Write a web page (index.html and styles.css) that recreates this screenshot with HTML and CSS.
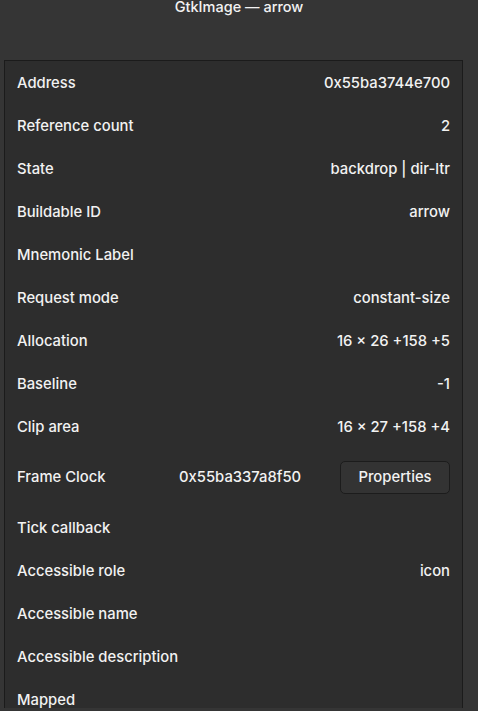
FILE: index.html
```html
<!DOCTYPE html>
<html>
<head>
<meta charset="utf-8">
<link rel="stylesheet" href="styles.css">
</head>
<body>
<div class="window">
  <div class="title">GtkImage — arrow</div>
  <div class="panel">
    <div class="row"><span class="label">Address</span><span class="value">0x55ba3744e700</span></div>
    <div class="row"><span class="label">Reference count</span><span class="value">2</span></div>
    <div class="row"><span class="label">State</span><span class="value">backdrop | dir-ltr</span></div>
    <div class="row"><span class="label">Buildable ID</span><span class="value">arrow</span></div>
    <div class="row"><span class="label">Mnemonic Label</span><span class="value"></span></div>
    <div class="row"><span class="label">Request mode</span><span class="value">constant-size</span></div>
    <div class="row"><span class="label">Allocation</span><span class="value">16 × 26 +158 +5</span></div>
    <div class="row"><span class="label">Baseline</span><span class="value">-1</span></div>
    <div class="row"><span class="label">Clip area</span><span class="value">16 × 27 +158 +4</span></div>
    <div class="row row-btn"><span class="label label-fixed">Frame Clock</span><span class="mid">0x55ba337a8f50</span><button class="btn">Properties</button></div>
    <div class="row"><span class="label">Tick callback</span><span class="value"></span></div>
    <div class="row"><span class="label">Accessible role</span><span class="value">icon</span></div>
    <div class="row"><span class="label">Accessible name</span><span class="value"></span></div>
    <div class="row"><span class="label">Accessible description</span><span class="value"></span></div>
    <div class="row"><span class="label">Mapped</span><span class="value"></span></div>
  </div>
</div>
</body>
</html>
```
FILE: styles.css
```css
html, body {
  margin: 0;
  padding: 0;
  background: #353535;
  overflow: hidden;
}
.window {
  width: 478px;
  height: 711px;
  overflow: hidden;
  font-family: Inter, "Noto Sans", sans-serif;
  font-size: 14.8px;
  font-weight: 500;
  color: #f2f2f2;
}
.title {
  height: 15px;
  line-height: 15px;
  margin-top: -1px;
  text-align: center;
  margin-bottom: 46px;
  font-size: 14.5px;
}
.panel {
  margin-left: 4px;
  width: 457px;
  height: 647px;
  background: #2d2d2d;
  border: 1px solid #1b1b1b;
  border-bottom: none;
  overflow: hidden;
}
.row {
  display: flex;
  align-items: center;
  justify-content: space-between;
  height: 43px;
  padding: 0 12px;
}
.row-btn {
  height: 58px;
  justify-content: flex-start;
}
.label-fixed {
  width: 162px;
}
.mid {
  flex: 1;
}
.btn {
  font: inherit;
  color: #f2f2f2;
  background: #333333;
  border: 1px solid #1c1c1c;
  border-radius: 5px;
  height: 33px;
  width: 110px;
  padding: 0;
}
```
